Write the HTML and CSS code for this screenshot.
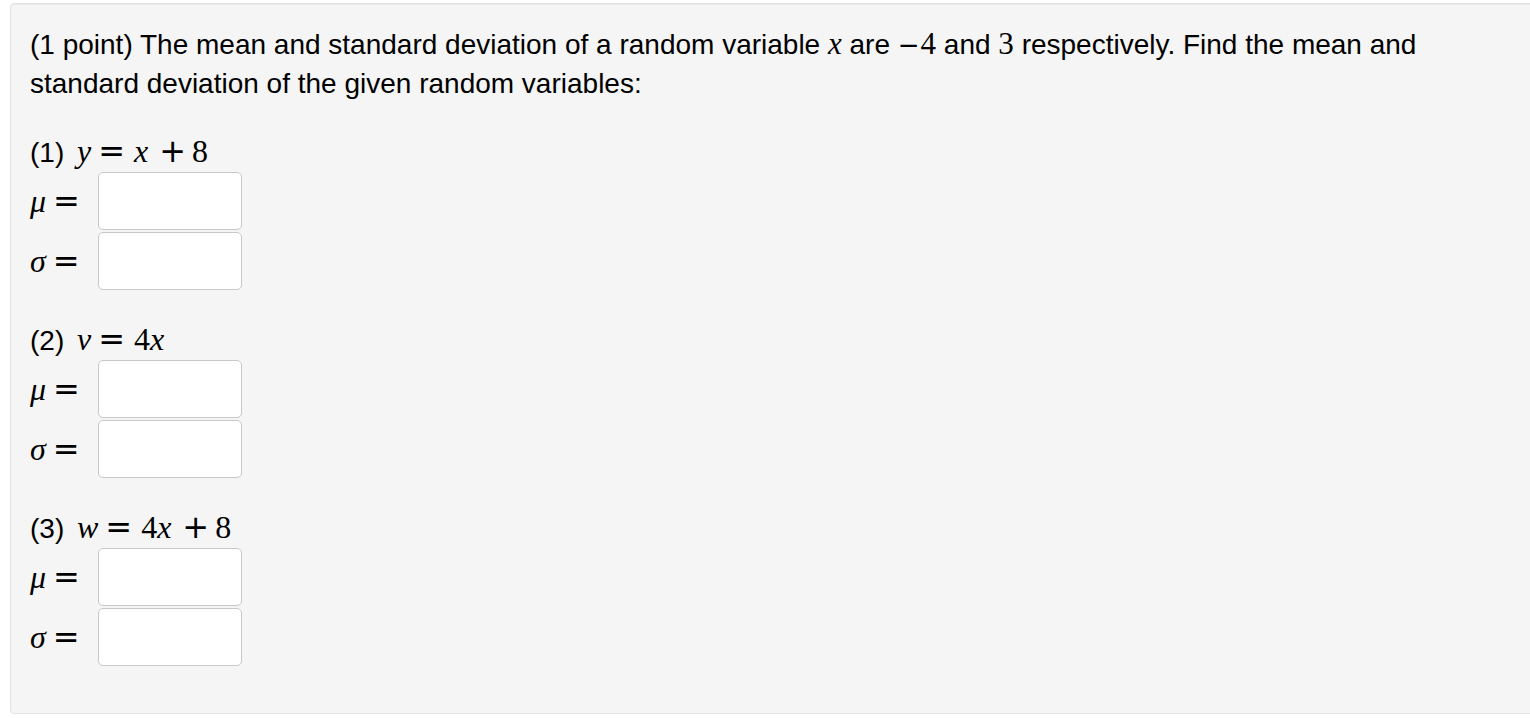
FILE: index.html
```html
<!DOCTYPE html>
<html lang="en">
<head>
<meta charset="utf-8">
<title>Problem</title>
<link rel="stylesheet" href="styles.css">
</head>
<body>
<div class="well">
  <p class="intro">(1 point) The mean and standard deviation of a random variable <span class="m mi"><i>x</i></span> are <span class="m mi"><span class="op">−</span>4</span> and <span class="m mi">3</span> respectively. Find the mean and standard deviation of the given random variables:</p>

  <div class="group">
    <div class="eq">(1) <span class="m"><i>y</i><span class="op rel">=</span><i>x</i><span class="op bin">+</span>8</span></div>
    <div class="row"><span class="m lbl"><i>μ</i><span class="op rel">=</span></span><input class="ans" type="text"></div>
    <div class="row"><span class="m lbl"><i>σ</i><span class="op rel">=</span></span><input class="ans" type="text"></div>
  </div>

  <div class="group">
    <div class="eq">(2) <span class="m"><i>v</i><span class="op rel">=</span>4<i>x</i></span></div>
    <div class="row"><span class="m lbl"><i>μ</i><span class="op rel">=</span></span><input class="ans" type="text"></div>
    <div class="row"><span class="m lbl"><i>σ</i><span class="op rel">=</span></span><input class="ans" type="text"></div>
  </div>

  <div class="group">
    <div class="eq">(3) <span class="m"><i>w</i><span class="op rel">=</span>4<i>x</i><span class="op bin">+</span>8</span></div>
    <div class="row"><span class="m lbl"><i>μ</i><span class="op rel">=</span></span><input class="ans" type="text"></div>
    <div class="row"><span class="m lbl"><i>σ</i><span class="op rel">=</span></span><input class="ans" type="text"></div>
  </div>
</div>
</body>
</html>
```

FILE: styles.css
```css
html, body {
  margin: 0;
  padding: 0;
  background: #ffffff;
  overflow: hidden;
}

body {
  font-family: "Liberation Sans", Arial, sans-serif;
  font-size: 28px;
  color: #000;
}

.well {
  margin: 3px 0 0 10px;
  width: 1540px;
  height: 711px;
  box-sizing: border-box;
  background: #f5f5f5;
  border: 1px solid #e3e3e3;
  border-radius: 4px;
  box-shadow: inset 0 1px 1px rgba(0, 0, 0, 0.05);
  padding: 21px 19px 0 19px;
}

.intro {
  margin: 0;
  line-height: 39px;
  width: 1430px;
}

.m {
  font-family: "Liberation Serif", "Times New Roman", serif;
  font-size: 32px;
  line-height: 1;
}

.m i {
  font-style: italic;
}

.op {
  font-family: "DejaVu Sans", sans-serif;
  font-size: 32px;
}

.intro .mi {
  font-size: 31px;
}

.intro .op {
  font-size: 26px;
  margin-right: 1px;
}

.rel {
  margin: 0 9px 0 7px;
}

.bin {
  margin: 0 6px 0 11px;
}

.group {
  margin-top: 32px;
}

.eq {
  line-height: 36px;
  height: 36px;
}

.eq .m {
  margin-left: 5px;
}

.row {
  display: flex;
  align-items: center;
  height: 60px;
}

.row .rel {
  margin-right: 7px;
}

.lbl {
  display: inline-block;
}

.ans {
  margin-left: 11px;
  width: 144px;
  height: 58px;
  box-sizing: border-box;
  border: 1.5px solid #c8c8c8;
  border-radius: 5px;
  background: #ffffff;
  padding: 4px 6px;
  font-size: 24px;
  outline: none;
}
```
